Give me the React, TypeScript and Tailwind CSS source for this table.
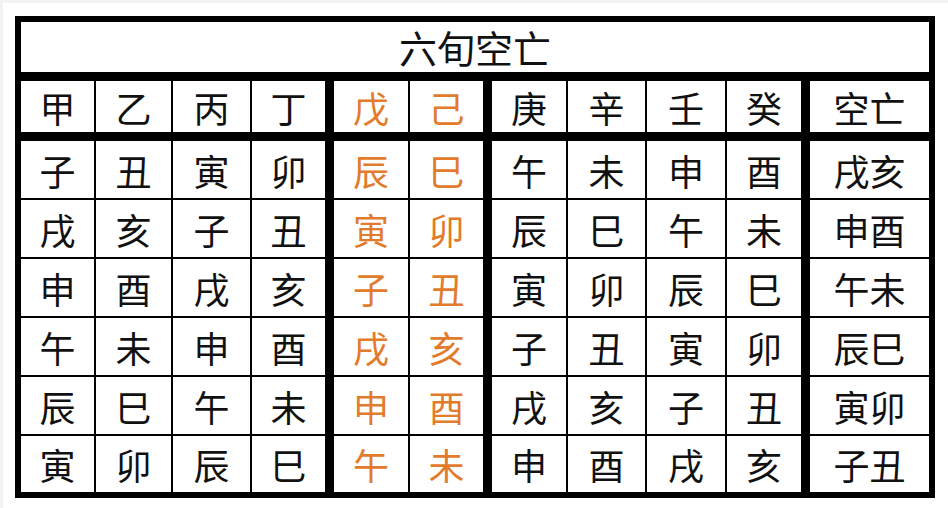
import React from "react";

// widths include the right-hand separator (border-box)
const widths = [
  "w-[75px]", "w-[77px]", "w-[79px]", "w-[82px]", "w-[76px]", "w-[82px]",
  "w-[76px]", "w-[79px]", "w-[80px]", "w-[83px]", "w-[119px]",
];

const seps = [
  "border-r-2", "border-r-2", "border-r-2", "border-r-[9px]", "border-r-2",
  "border-r-[9px]", "border-r-2", "border-r-2", "border-r-2", "border-r-[9px]", "",
];

const header = ["甲", "乙", "丙", "丁", "戊", "己", "庚", "辛", "壬", "癸", "空亡"];

const rows = [
  ["子", "丑", "寅", "卯", "辰", "巳", "午", "未", "申", "酉", "戌亥"],
  ["戌", "亥", "子", "丑", "寅", "卯", "辰", "巳", "午", "未", "申酉"],
  ["申", "酉", "戌", "亥", "子", "丑", "寅", "卯", "辰", "巳", "午未"],
  ["午", "未", "申", "酉", "戌", "亥", "子", "丑", "寅", "卯", "辰巳"],
  ["辰", "巳", "午", "未", "申", "酉", "戌", "亥", "子", "丑", "寅卯"],
  ["寅", "卯", "辰", "巳", "午", "未", "申", "酉", "戌", "亥", "子丑"],
];

const Row = ({ cells, rowClass }: { cells: string[]; rowClass: string }) => (
  <div className={`flex border-black ${rowClass}`}>
    {cells.map((c, i) => (
      <div
        key={i}
        className={`${widths[i]} ${seps[i]} border-black flex items-center justify-center ${
          i === 4 || i === 5 ? "text-[#e27b2c]" : "text-[#111]"
        }`}
      >
        {c}
      </div>
    ))}
  </div>
);

const App = () => {
  return (
    <div
      className="w-[948px] h-[508px] bg-white border-t-[3px] border-l-[3px] border-[#f2f2f2] pl-[12px] pt-[13px] text-[36px] leading-none"
      style={{ fontFamily: '"Noto Sans CJK SC", "Noto Sans", sans-serif' }}
    >
      <div className="w-[920px] border-[6px] border-black">
        <div className="h-[59px] border-b-[9px] border-black flex items-center justify-center text-[38px] text-[#111]">
          六旬空亡
        </div>
        <Row cells={header} rowClass="h-[60px] border-b-[9px]" />
        {rows.map((r, i) => (
          <Row
            key={i}
            cells={r}
            rowClass={i < rows.length - 1 ? "h-[59px] border-b-2" : "h-[56px]"}
          />
        ))}
      </div>
    </div>
  );
};

export default App;
